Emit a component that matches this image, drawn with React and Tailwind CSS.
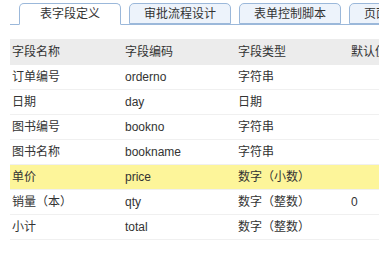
const tabs = ["表字段定义", "审批流程设计", "表单控制脚本", "页面布局设计"];

const rows = [
  ["订单编号", "orderno", "字符串", ""],
  ["日期", "day", "日期", ""],
  ["图书编号", "bookno", "字符串", ""],
  ["图书名称", "bookname", "字符串", ""],
  ["单价", "price", "数字（小数）", "", true],
  ["销量（本）", "qty", "数字（整数）", "0"],
  ["小计", "total", "数字（整数）", ""],
];

export default function App() {
  return (
    <div
      className="w-[379px] h-[258px] bg-white overflow-hidden text-[12px] text-[#333]"
      style={{ fontFamily: '"Liberation Sans", "Noto Sans CJK SC", sans-serif' }}
    >
      {/* Tabs */}
      <div className="ml-[10px] pt-[3px] flex items-end gap-[8px] pl-[9px] border-b border-[#9bb8da] w-[460px]">
        {tabs.map((t, i) => (
          <div
            key={t}
            className={
              "shrink-0 w-[102px] h-[21px] flex items-center justify-center border border-[#9bb8da] rounded-t-[5px] " +
              (i === 0 ? "bg-white border-b-white -mb-px h-[22px]" : "bg-[#edf3fb]")
            }
          >
            {t}
          </div>
        ))}
      </div>

      {/* Table */}
      <div className="ml-[10px] mt-[14px] w-[440px]">
        <div className="flex h-[26px] items-center bg-[#ececec]">
          <div className="w-[113px] pl-[2px]">字段名称</div>
          <div className="w-[113px] pl-[2px]">字段编码</div>
          <div className="w-[113px] pl-[2px]">字段类型</div>
          <div className="w-[100px] pl-[2px]">默认值</div>
        </div>
        {rows.map((r) => (
          <div
            key={r[1]}
            className={
              "flex h-[25px] items-center border-b border-[#f0f0f0] " +
              (r[4] ? "bg-[#fdf59a]" : "")
            }
          >
            <div className="w-[113px] pl-[2px]">{r[0]}</div>
            <div className="w-[113px] pl-[2px]">{r[1]}</div>
            <div className="w-[113px] pl-[2px]">{r[2]}</div>
            <div className="w-[100px] pl-[2px]">{r[3]}</div>
          </div>
        ))}
      </div>
    </div>
  );
}
